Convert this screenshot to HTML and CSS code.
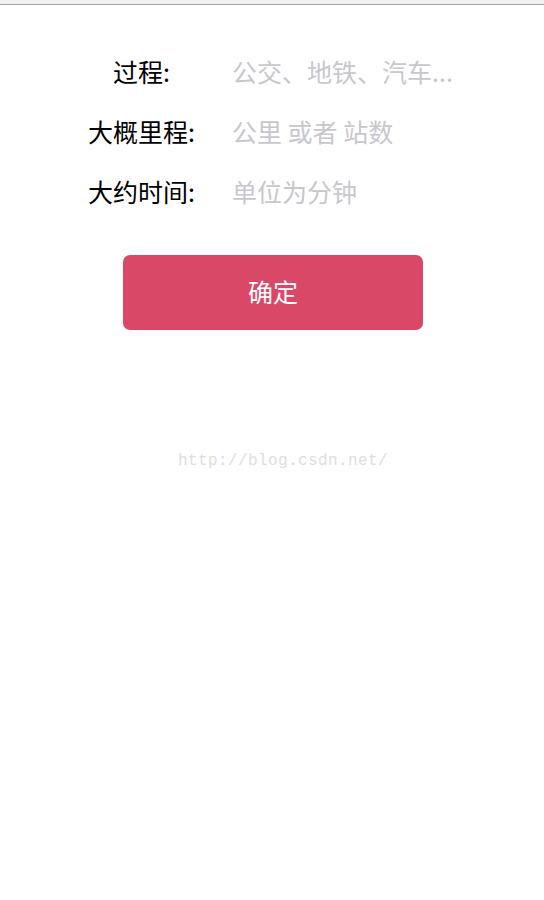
FILE: index.html
```html
<!DOCTYPE html>
<html lang="zh-CN">

<head>
    <meta charset="UTF-8">
    <meta name="viewport" content="width=device-width, initial-scale=1.0">
    <title>记录</title>
    <link rel="stylesheet" href="styles.css">
</head>

<body>
    <div class="topbar"></div>
    <form class="form">
        <div class="row">
            <label for="way">过程:</label>
            <input type="text" id="way" placeholder="公交、地铁、汽车...">
        </div>
        <div class="row">
            <label for="dist">大概里程:</label>
            <input type="text" id="dist" placeholder="公里 或者 站数">
        </div>
        <div class="row">
            <label for="time">大约时间:</label>
            <input type="text" id="time" placeholder="单位为分钟">
        </div>
        <button type="button" class="ok">确定</button>
    </form>
    <p class="mark">http://blog.csdn.net/</p>
</body>

</html>
```

FILE: styles.css
```css
body {
    margin: 0;
    background-color: white;
    font-family: "Noto Sans CJK SC", "Noto Sans", sans-serif;
}

.topbar {
    height: 4px;
    background-color: #f1f1f1;
    border-bottom: 1px solid #a3a3a3;
}

.form {
    width: 374px;
    margin: 36px auto 0 85px;
    display: flex;
    flex-direction: column;
}

.row {
    display: flex;
    align-items: center;
    height: 60px;
    gap: 34px;
}

label {
    width: 113px;
    text-align: center;
    font-size: 25px;
    color: #000;
}

input[type="text"] {
    flex: 1;
    min-width: 0;
    border: none;
    outline: none;
    padding: 0;
    font-size: 25px;
    font-family: inherit;
    text-overflow: ellipsis;
}

input::placeholder {
    color: #c7c7cd;
}

.ok {
    align-self: center;
    width: 300px;
    height: 75px;
    margin-top: 34px;
    margin-left: 2px;
    padding: 0 0 4px;
    border: none;
    border-radius: 7px;
    background-color: #d94967;
    color: white;
    font-size: 25px;
    font-family: inherit;
}

.mark {
    margin: 122px 0 0 178px;
    font-family: "Liberation Mono", monospace;
    font-size: 16px;
    letter-spacing: 0.4px;
    color: #dededa;
}
```
